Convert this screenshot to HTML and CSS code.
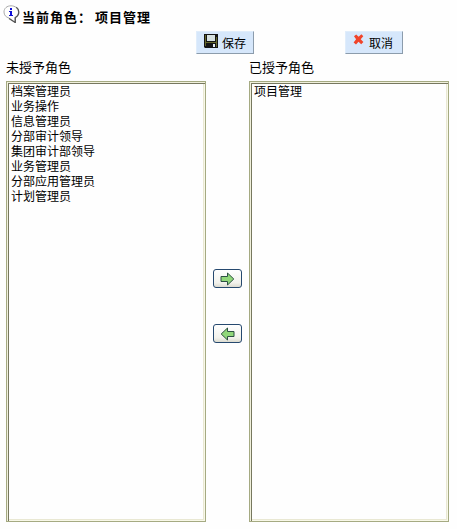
FILE: index.html
```
<!DOCTYPE html>
<html lang="zh-CN">
<head>
<meta charset="utf-8">
<title>角色授权</title>
<link rel="stylesheet" href="styles.css">
</head>
<body>
<main class="page">
  <header class="heading">
    <svg class="info" width="17" height="18" viewBox="0 0 17 18">
      <path d="M8 .8C4 .8 1 3.300 1 7c0 3.200 2 5.200 5 6l6 4.500v-4.800c2.300-1.100 3.500-3 3.500-5.700C15.500 3.300 12 .8 8 .8z" fill="#fff" stroke="#aaa"/>
      <path d="M6 13.500l6.300 4v-5c2.200-1.100 3.500-3 3.500-5.500 0-2-.9-3.700-2.500-4.800" fill="none" stroke="#555" stroke-width="1.300"/>
      <path d="M7 3h2v2H7zM6 6h3v4h1v1H6v-1h1V7H6z" fill="#1010d8"/>
    </svg>
    <h1 class="title">当前角色：<span class="role">项目管理</span></h1>
  </header>
  <div class="toolbar">
    <button class="action save">
      <svg class="save-icon" width="14" height="14" viewBox="0 0 14 14">
        <path d="M0 0h14v14H1l-1-1z" fill="#151515"/>
        <path d="M3 1h8v6H3z" fill="#d5e0e0"/>
        <path d="M1 1h1v11H1zM12 3h1v10h-1zM2 8h10v1H2z" fill="#66682c"/>
        <path d="M9 10h2v3H9z" fill="#e4edf5"/>
      </svg>
      <span>保存</span>
    </button>
    <button class="action cancel">
      <svg class="cancel-icon" width="11" height="11" viewBox="0 0 11 11">
        <path d="M1 2.200 3.200.5l2.400 2.300L8.400.2l1.900 2.100-2.600 3 2.700 2.800-2.200 2.200-2.700-2.500L3 10.600.6 8.500l2.500-3.200z" fill="#f0442a"/>
      </svg>
      <span>取消</span>
    </button>
  </div>
  <div class="transfer">
    <section class="panel">
      <h2 class="label">未授予角色</h2>
      <ul class="list">
        <li>档案管理员</li>
        <li>业务操作</li>
        <li>信息管理员</li>
        <li>分部审计领导</li>
        <li>集团审计部领导</li>
        <li>业务管理员</li>
        <li>分部应用管理员</li>
        <li>计划管理员</li>
      </ul>
    </section>
    <div class="movers">
      <button class="move" aria-label="添加">
        <svg width="15" height="14" viewBox="0 0 15 14"><path class="arrow" d="M1 4.500h6.500V1L13.800 7 7.500 13V9.500H1z"/></svg>
      </button>
      <button class="move" aria-label="移除">
        <svg width="15" height="14" viewBox="0 0 15 14"><path class="arrow" d="M14 4.500H7.500V1L1.200 7l6.300 6V9.500H14z"/></svg>
      </button>
    </div>
    <section class="panel">
      <h2 class="label">已授予角色</h2>
      <ul class="list">
        <li>项目管理</li>
      </ul>
    </section>
  </div>
</main>
</body>
</html>
```

FILE: styles.css
```
* {
  box-sizing: border-box;
}

body {
  margin: 0;
  background: #fefefe;
  color: #000;
  font-family: "Liberation Sans", "Noto Sans CJK SC", sans-serif;
  font-size: 12px;
}

.page {
  width: 457px;
  height: 529px;
  padding: 5px 8px 7px 6px;
  overflow: hidden;
}

.heading {
  display: flex;
  height: 26px;
  margin-left: -3px;
}

.info {
  flex: none;
}

.title {
  margin: 3px 0 0 2px;
  font-size: 13px;
  line-height: 20px;
  letter-spacing: 1px;
  white-space: nowrap;
}

.role {
  margin-left: 3px;
}

.toolbar {
  display: flex;
  gap: 91px;
  height: 29px;
  padding-left: 190px;
}

.action {
  display: flex;
  align-items: center;
  width: 58px;
  height: 23px;
  padding: 0 0 0 7px;
  border: 1px solid;
  border-color: #e0edfb #8c9cac #8c9cac #e0edfb;
  background: #d6e7fb;
  color: #000;
  font: inherit;
  white-space: nowrap;
}

.save-icon {
  margin: 0 4px 3px 0;
}

.cancel-icon {
  margin: 0 5px 6px 0;
}

.transfer {
  display: flex;
  height: 462px;
}

.panel {
  display: flex;
  flex-direction: column;
  width: 200px;
}

.label {
  height: 21px;
  margin: 0;
  font-size: 13px;
  font-weight: normal;
  line-height: 16px;
}

.list {
  flex: 1;
  margin: 0;
  padding: 2px 0 0 3px;
  border: 1px solid #a5aa82;
  box-shadow: inset 1px 1px #f0f0dc, inset 2px 2px #77785f, inset -1px -1px #f8f8e8, inset -2px -2px #e9e8d3;
  list-style: none;
  line-height: 15px;
}

.list li {
  height: 15px;
  padding-left: 1px;
}

.list li:first-child {
  margin-top: 1px;
}

.movers {
  display: flex;
  flex-direction: column;
  align-items: flex-start;
  gap: 36px;
  width: 43px;
  padding: 209px 0 0 7px;
}

.move {
  display: flex;
  align-items: center;
  justify-content: center;
  width: 29px;
  height: 19px;
  padding: 0;
  border: 1px solid #26496f;
  border-radius: 3px;
  background: linear-gradient(#fff, #f2f2ec 75%, #dcdbd0);
}

.arrow {
  fill: #90d779;
  stroke: #2c5142;
  stroke-width: 1;
}
```
